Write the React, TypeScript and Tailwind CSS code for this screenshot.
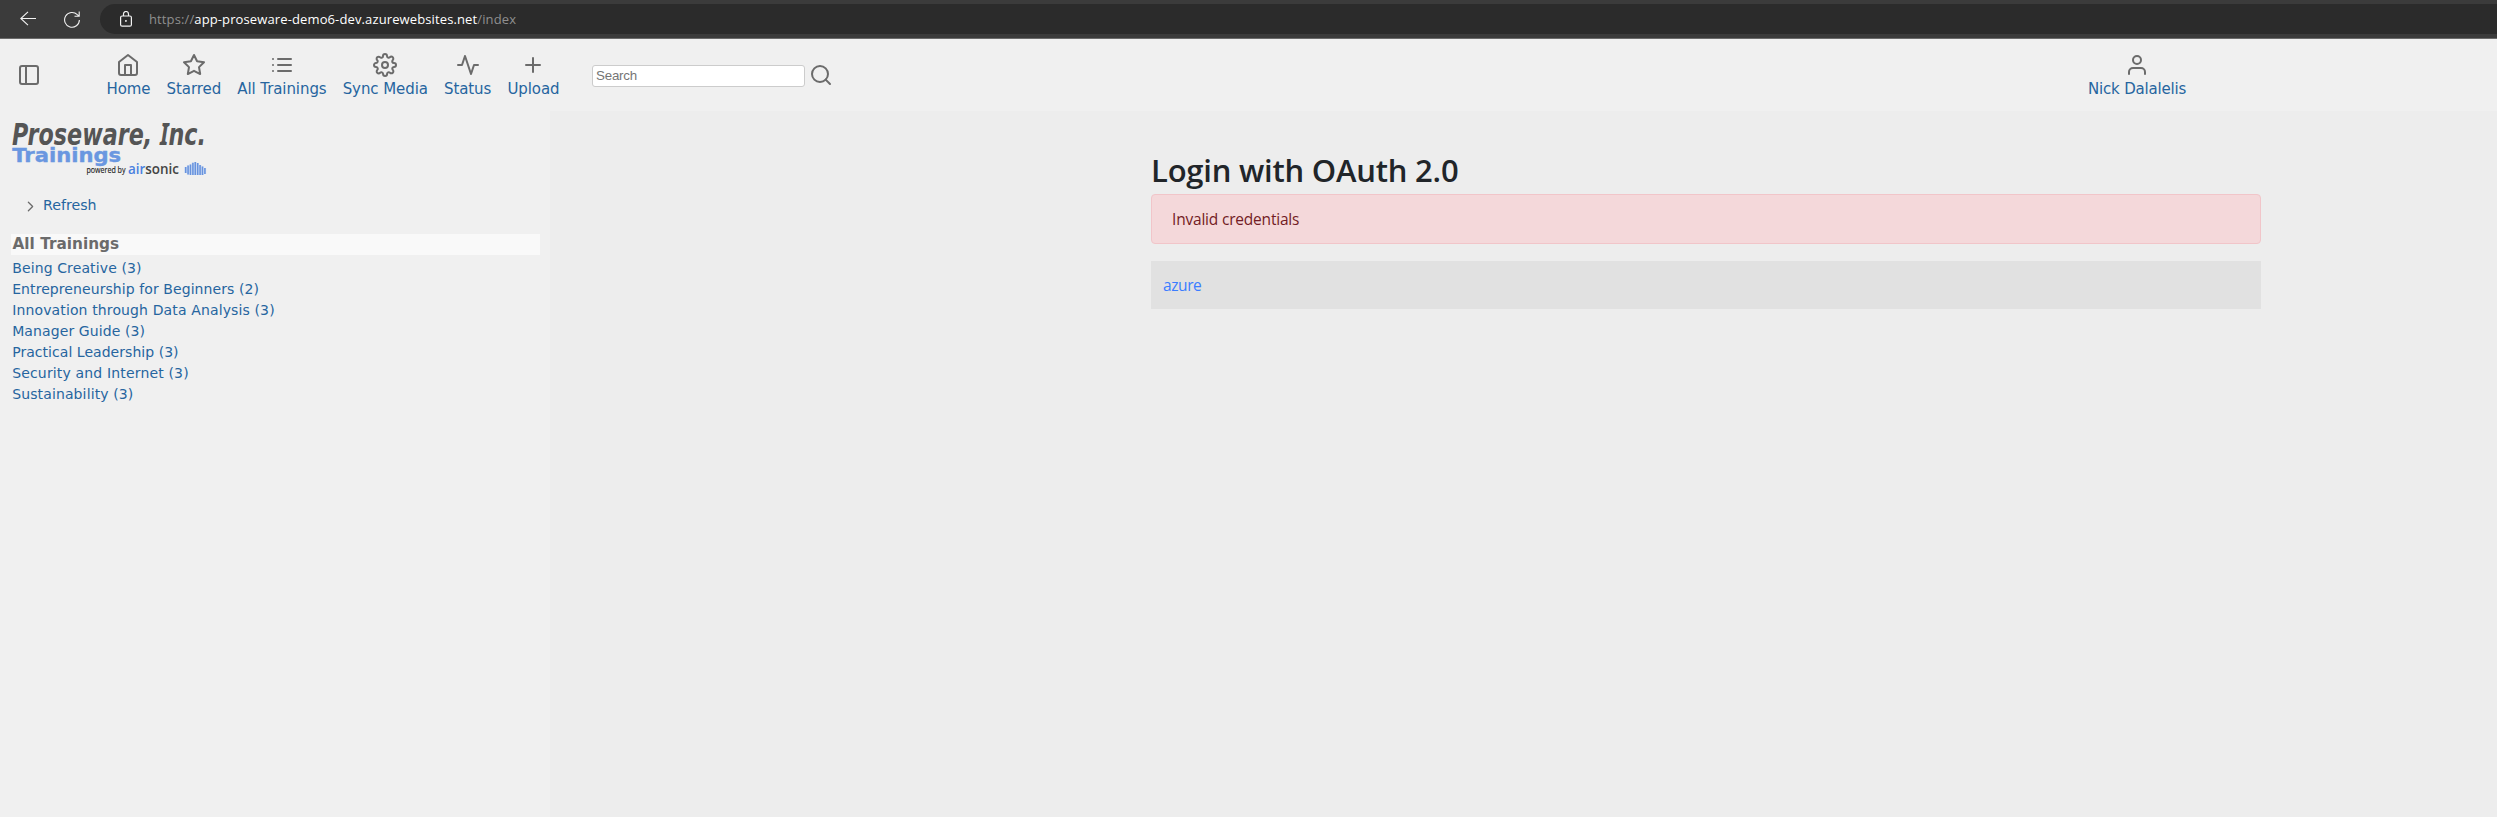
import type { ReactNode } from "react";
import { FiActivity, FiChevronRight, FiHome, FiList, FiPlus, FiSearch, FiSettings, FiSidebar, FiStar, FiUser } from "react-icons/fi";

const menu = [
  { label: "Home", icon: <FiHome size={24} /> },
  { label: "Starred", icon: <FiStar size={24} /> },
  { label: "All Trainings", icon: <FiList size={24} /> },
  { label: "Sync Media", icon: <FiSettings size={24} /> },
  { label: "Status", icon: <FiActivity size={24} /> },
  { label: "Upload", icon: <FiPlus size={24} /> },
];

const trainings = [
  { label: "Being Creative (3)", spacing: "tracking-[0.12px]" },
  { label: "Entrepreneurship for Beginners (2)", spacing: "tracking-[0.08px]" },
  { label: "Innovation through Data Analysis (3)", spacing: "tracking-[0.13px]" },
  { label: "Manager Guide (3)", spacing: "tracking-[0.1px]" },
  { label: "Practical Leadership (3)", spacing: "tracking-[0.04px]" },
  { label: "Security and Internet (3)", spacing: "tracking-[0.16px]" },
  { label: "Sustainability (3)", spacing: "tracking-[0.12px]" },
];

function BrowserBar() {
  return (
    <header className="flex h-[39px] items-start border-b border-[#6b6b6b] bg-[#3b3b3b] pt-1">
      <div className="flex h-[30px] w-[100px] shrink-0 items-center text-[#f2f2f2]">
        <svg className="ml-5" width="16" height="16" viewBox="0 0 16 16" fill="none" stroke="currentColor" strokeWidth="1.1">
          <path d="M16 7.5H.8M8 .8L.8 7.5 8 14.2" />
        </svg>
        <svg className="ml-7" width="16" height="17" viewBox="0 0 16 17" fill="none" stroke="currentColor" strokeWidth="1.1">
          <path d="M15.4 9A7.4 7.4 0 1 1 13.3 3.7L15 5.2M15.2.5V5.3H10.5" />
        </svg>
      </div>
      <div className="flex h-[30px] flex-1 items-center rounded-l-full bg-[#2b2b2b] pl-5">
        <svg width="12" height="16" viewBox="0 0 12 16" fill="none" stroke="#f2f2f2" strokeWidth="1.2">
          <rect x=".6" y="5" width="10.8" height="10.2" rx="1.5" />
          <path d="M3.5 5V3a2.500 2.500 0 0 1 5 0V5" />
          <rect x="5.5" y="9.6" width="1" height="1" fill="#f2f2f2" stroke="#f2f2f2" strokeWidth=".6" />
        </svg>
        <span className="ml-[17px] whitespace-nowrap font-['Open_Sans',sans-serif] text-[13px] leading-[30px] tracking-[0.12px] text-[#8f8f8f]">
          https://<span className="text-white">app-proseware-demo6-dev.azurewebsites.net</span>/index
        </span>
      </div>
    </header>
  );
}

function MenuItem({ icon, label, spacing = "tracking-[-0.08px]" }: { icon: ReactNode; label: string; spacing?: string }) {
  return (
    <a className="flex flex-col items-center">
      <span className="text-[#6b6b6b]">{icon}</span>
      <span className={`whitespace-nowrap text-[15px] leading-6 text-[#26659f] ${spacing}`}>{label}</span>
    </a>
  );
}

function TopBar() {
  return (
    <nav className="flex h-[72px] items-start bg-[#f0f0f0] pt-[14px]">
      <FiSidebar size={24} className="mt-[10px] ml-[17px] text-[#6b6b6b]" />
      <div className="ml-[65.500px] flex w-[453px] justify-between">
        {menu.map((m) => (
          <MenuItem key={m.label} {...m} />
        ))}
      </div>
      <div className="ml-[32.500px] mt-3 flex h-[22px] w-[213px] items-center rounded-[3px] border border-[#cccccc] bg-white pl-[3px] font-['Liberation_Sans',sans-serif] text-[13.333px] leading-5 tracking-[-0.2px] text-[#757575]">
        Search
      </div>
      <FiSearch size={24} className="mt-[10px] ml-1 text-[#6b6b6b]" />
      <div className="mr-[311px] ml-auto">
        <MenuItem icon={<FiUser size={24} />} label="Nick Dalalelis" spacing="tracking-[-0.2px]" />
      </div>
    </nav>
  );
}

const cloudBars = [
  [0, 5, 11],
  [2.4, 3.5, 12.5],
  [4.8, 2.5, 13],
  [7.2, 0.8, 13],
  [9.6, 0, 13],
  [12, 1, 13],
  [14.4, 3, 13],
  [16.8, 4.5, 13],
  [19.2, 6, 12],
];

function Logo() {
  return (
    <svg className="block" width="200" height="68" viewBox="11 111 200 68">
      <text x="12" y="144.7" fontFamily="'DejaVu Sans', sans-serif" fontWeight="bold" fontStyle="italic" fontSize="29.5" fill="#555555" textLength="194" lengthAdjust="spacingAndGlyphs">
        Proseware, <tspan fontFamily="'Noto Sans', sans-serif">I</tspan>nc.
      </text>
      <text x="12.2" y="162" fontFamily="'DejaVu Sans', sans-serif" fontWeight="bold" fontSize="20" fill="#6a97e0" stroke="#6a97e0" strokeWidth="0.4" textLength="109" lengthAdjust="spacingAndGlyphs">Trainings</text>
      <text x="86.5" y="173.3" fontFamily="'Open Sans', sans-serif" fontSize="9" fill="#222222" stroke="#222222" strokeWidth="0.15" textLength="39" lengthAdjust="spacingAndGlyphs">powered by</text>
      <text x="128" y="174" fontFamily="'Open Sans', sans-serif" fontWeight="600" fontSize="15" fill="#444444" textLength="51" lengthAdjust="spacingAndGlyphs">
        <tspan fill="#4a80e0">air</tspan>sonic
      </text>
      <g transform="translate(184.7 162)">
        {cloudBars.map(([x, top, bottom]) => (
          <g key={x} fill="none">
            <path d={`M${x + 1} ${top}V${bottom}`} stroke="#c3d5f3" strokeWidth="2.4" />
            <path d={`M${x + 1} ${top}V${bottom}`} stroke="#6893dd" strokeWidth="1.5" />
          </g>
        ))}
      </g>
    </svg>
  );
}

function Sidebar() {
  return (
    <aside className="w-[550px] shrink-0 bg-[#f0f0f0] pr-[10px] pl-[11px]">
      <Logo />
      <div className="mt-4 flex h-[21px] items-center pl-[11px]">
        <FiChevronRight size={17} strokeWidth={1.8} className="mt-[2px] text-[#6b6b6b]" />
        <a className="ml-[4px] text-[14.2px] leading-[21px] text-[#26659f]">Refresh</a>
      </div>
      <h2 className="mt-[18px] mb-[3px] h-[21px] bg-[#f9f9f9] pl-[1.500px] text-[15.3px] leading-[21px] font-bold text-[#6b6b6b]">All Trainings</h2>
      {trainings.map((t) => (
        <a key={t.label} className={`block pl-[1.2px] text-[14px] leading-[21px] text-[#26659f] ${t.spacing}`}>
          {t.label}
        </a>
      ))}
    </aside>
  );
}

function LoginPanel() {
  return (
    <main className="flex-1 bg-[#ededed] pt-10 pl-[601px] font-['Open_Sans',sans-serif]">
      <section className="w-[1110px]">
        <h1 className="mb-1 h-[39px] text-[31px] leading-[38px] font-semibold tracking-[-0.22px] whitespace-nowrap text-[#212529]">Login with OAuth 2.0</h1>
        <div className="h-[50px] rounded border border-[#f1c5c9] bg-[#f4d8da] pl-5 text-[15.5px] leading-[48px] tracking-[-0.2px] text-[#721c24]">Invalid credentials</div>
        <div className="mt-[17px] h-12 bg-[#e1e1e1] pl-3 text-[15.5px] leading-[48px] tracking-[-0.4px] text-[#3b7dff]">azure</div>
      </section>
    </main>
  );
}

export default function App() {
  return (
    <div className="flex h-[817px] w-[2497px] flex-col overflow-hidden font-['DejaVu_Sans',Verdana,sans-serif]">
      <BrowserBar />
      <TopBar />
      <div className="flex flex-1">
        <Sidebar />
        <LoginPanel />
      </div>
    </div>
  );
}
